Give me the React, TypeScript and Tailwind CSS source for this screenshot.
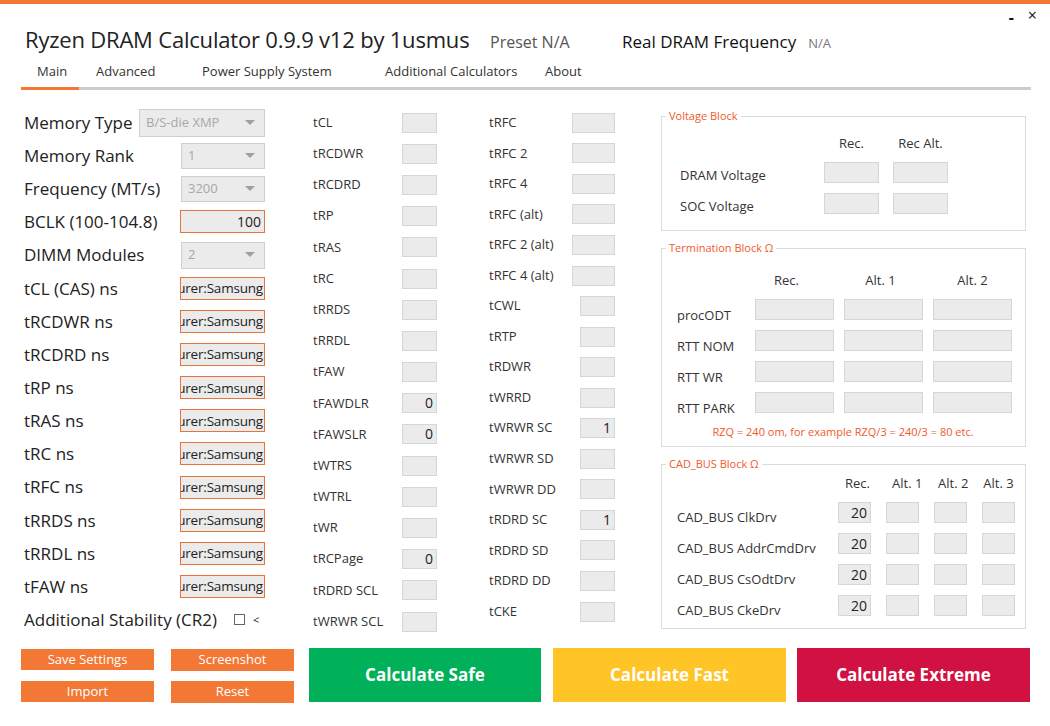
import React from "react";

const font = "font-['Open_Sans',sans-serif]";

const col2: [string, string][] = [
  ["tCL", ""], ["tRCDWR", ""], ["tRCDRD", ""], ["tRP", ""], ["tRAS", ""], ["tRC", ""],
  ["tRRDS", ""], ["tRRDL", ""], ["tFAW", ""], ["tFAWDLR", "0"], ["tFAWSLR", "0"],
  ["tWTRS", ""], ["tWTRL", ""], ["tWR", ""], ["tRCPage", "0"], ["tRDRD SCL", ""], ["tWRWR SCL", ""],
];

const col3: [string, string, boolean][] = [
  ["tRFC", "", true], ["tRFC 2", "", true], ["tRFC 4", "", true], ["tRFC (alt)", "", true],
  ["tRFC 2 (alt)", "", true], ["tRFC 4 (alt)", "", true], ["tCWL", "", false], ["tRTP", "", false],
  ["tRDWR", "", false], ["tWRRD", "", false], ["tWRWR SC", "1", false], ["tWRWR SD", "", false],
  ["tWRWR DD", "", false], ["tRDRD SC", "1", false], ["tRDRD SD", "", false], ["tRDRD DD", "", false],
  ["tCKE", "", false],
];

const nsRows = ["tCL (CAS) ns", "tRCDWR ns", "tRCDRD ns", "tRP ns", "tRAS ns", "tRC ns", "tRFC ns", "tRRDS ns", "tRRDL ns", "tFAW ns"];

function Box({ w, h, value }: { w: string; h: string; value?: string }) {
  return (
    <div className={`${w} ${h} bg-[#ebebeb] border border-[#d6d6d6] flex items-center justify-end pr-[3px] text-[14px] text-[#222] leading-none`}>
      {value}
    </div>
  );
}

function Dropdown({ w, h, text }: { w: string; h: string; text: string }) {
  return (
    <div className={`${w} ${h} bg-[#ebebeb] border border-[#cfcfcf] flex items-center justify-between pl-[6px] pr-[9px]`}>
      <span className="text-[13px] text-[#a8a8a8]">{text}</span>
      <svg width="10" height="6" viewBox="0 0 10 6"><path d="M0 0 L10 0 L5 5 Z" fill="#a0a0a0" /></svg>
    </div>
  );
}

function NameInput() {
  return (
    <div className="w-[85px] h-[23px] bg-[#ebebeb] border border-[#e8743b] overflow-hidden flex items-center justify-end pr-[1px]">
      <span className="whitespace-nowrap text-[13.5px] tracking-[-0.2px] text-[#222]">Manufacturer:Samsung</span>
    </div>
  );
}

function Group({ title, className, children }: { title: string; className: string; children: React.ReactNode }) {
  return (
    <div className={`relative border border-[#dcdcdc] ${className}`}>
      <span className="absolute left-[4px] -top-[9px] bg-white px-[3px] text-[11px] leading-[16px] text-[#ef5a2b]">{title}</span>
      {children}
    </div>
  );
}

export default function App() {
  return (
    <div className={`${font} w-[1050px] h-[726px] bg-white relative overflow-hidden text-[#222]`}>
      <div className="h-[4px] bg-[#f37735]" />
      {/* window controls */}
      <div className="absolute top-[5px] right-[13px] flex items-start gap-[14px] text-[#111]">
        <span className="text-[16px] font-bold leading-[24px]">-</span>
        <span className="text-[16px] leading-[20px]">×</span>
      </div>

      {/* header */}
      <div className="flex items-baseline pt-[19px] pl-[25px]">
        <div className="w-[465px] text-[22px] tracking-[-0.2px] leading-[32px] text-[#222] whitespace-nowrap">Ryzen DRAM Calculator 0.9.9 v12 by 1usmus</div>
        <div className="w-[132px] text-[16px] text-[#555]">Preset N/A</div>
        <div className="text-[17px] text-[#111]">Real DRAM Frequency</div>
        <div className="ml-[12px] text-[13px] text-[#777]">N/A</div>
      </div>

      {/* tabs */}
      <div className="mt-[7px] ml-[21px] w-[1010px]">
        <div className="flex text-[13px] leading-[18px] text-[#333] pb-[7px]">
          <div className="w-[75px] pl-[16px]">Main</div>
          <div className="w-[106px]">Advanced</div>
          <div className="w-[183px]">Power Supply System</div>
          <div className="w-[160px]">Additional Calculators</div>
          <div>About</div>
        </div>
        <div className="flex h-[3px]">
          <div className="w-[58px] bg-[#f37735]" />
          <div className="flex-1 bg-[#cccccc]" />
        </div>
      </div>

      {/* content */}
      <div className="flex mt-[16px] h-[542px] pl-[24px]">
        {/* left column */}
        <div className="w-[241px] flex flex-col">
          <div className="h-[33.15px] flex items-center justify-between">
            <span className="text-[17px]">Memory Type</span>
            <Dropdown w="w-[126px]" h="h-[28px]" text="B/S-die XMP" />
          </div>
          <div className="h-[33.15px] flex items-center justify-between">
            <span className="text-[17px]">Memory Rank</span>
            <Dropdown w="w-[84px]" h="h-[26px]" text="1" />
          </div>
          <div className="h-[33.15px] flex items-center justify-between">
            <span className="text-[17px]">Frequency (MT/s)</span>
            <Dropdown w="w-[84px]" h="h-[26px]" text="3200" />
          </div>
          <div className="h-[33.15px] flex items-center justify-between">
            <span className="text-[17px]">BCLK (100-104.8)</span>
            <div className="w-[85px] h-[23px] bg-[#ebebeb] border border-[#e8743b] flex items-center justify-end pr-[3px] text-[14px]">100</div>
          </div>
          <div className="h-[33.15px] flex items-center justify-between">
            <span className="text-[17px]">DIMM Modules</span>
            <Dropdown w="w-[84px]" h="h-[27px]" text="2" />
          </div>
          {nsRows.map((r) => (
            <div key={r} className="h-[33.15px] flex items-center justify-between">
              <span className="text-[17px]">{r}</span>
              <NameInput />
            </div>
          ))}
          <div className="h-[33.15px] flex items-center">
            <span className="text-[17px]">Additional Stability (CR2)</span>
            <div className="ml-[17px] w-[11px] h-[11px] border border-[#666] bg-white" />
            <span className="ml-[8px] text-[11px] leading-none">&lt;</span>
          </div>
        </div>

        {/* column 2 */}
        <div className="ml-[48px] w-[124px] flex flex-col pt-[1px]">
          {col2.map(([l, v]) => (
            <div key={l} className="h-[31.2px] flex items-center justify-between">
              <span className="text-[13px] text-[#333]">{l}</span>
              <Box w="w-[35px]" h="h-[20px]" value={v} />
            </div>
          ))}
        </div>

        {/* column 3 */}
        <div className="ml-[52px] w-[126px] flex flex-col pt-[1.5px]">
          {col3.map(([l, v, wide]) => (
            <div key={l} className="h-[30.56px] flex items-center justify-between">
              <span className="text-[13px] text-[#333]">{l}</span>
              <Box w={wide ? "w-[43px]" : "w-[35px]"} h="h-[20px]" value={v} />
            </div>
          ))}
        </div>

        {/* right column */}
        <div className="ml-[46px] w-[365px] flex flex-col pt-[10px] gap-[17px]">
          <Group title="Voltage Block" className="h-[115px] pt-[17px] pl-[18px]">
            <div className="grid grid-cols-[130px_55px_55px] gap-x-[14px] gap-y-[10px] items-center text-[13px] text-[#333]">
              <div className="leading-[18px]" />
              <div className="leading-[18px] text-center">Rec.</div>
              <div className="leading-[18px] text-center">Rec Alt.</div>
              <div className="h-[21px] leading-[26px]">DRAM Voltage</div>
              <Box w="w-[55px]" h="h-[21px]" />
              <Box w="w-[55px]" h="h-[21px]" />
              <div className="h-[21px] leading-[26px]">SOC Voltage</div>
              <Box w="w-[55px]" h="h-[21px]" />
              <Box w="w-[55px]" h="h-[21px]" />
            </div>
          </Group>

          <Group title="Termination Block Ω" className="h-[199px] pt-[22px] pl-[15px]">
            <div className="grid grid-cols-[68px_79px_79px_79px] gap-x-[10px] gap-y-[10px] items-center text-[13px] text-[#333]">
              <div className="leading-[18px]" />
              <div className="leading-[18px] text-center pr-[16px]">Rec.</div>
              <div className="leading-[18px] text-center pr-[6px]">Alt. 1</div>
              <div className="leading-[18px] text-center">Alt. 2</div>
              {["procODT", "RTT NOM", "RTT WR", "RTT PARK"].map((l) => (
                <React.Fragment key={l}>
                  <div className="h-[21px] leading-[32px] whitespace-nowrap">{l}</div>
                  <Box w="w-[79px]" h="h-[21px]" />
                  <Box w="w-[79px]" h="h-[21px]" />
                  <Box w="w-[79px]" h="h-[21px]" />
                </React.Fragment>
              ))}
            </div>
            <div className="mt-[11px] pr-[16px] text-center text-[11px] leading-[16px] text-[#ef5a2b]">RZQ = 240 om, for example RZQ/3 = 240/3 = 80 etc.</div>
          </Group>

          <Group title="CAD_BUS Block Ω" className="h-[165px] pt-[9px] pl-[15px]">
            <div className="grid grid-cols-[146px_33px_33px_33px_33px] gap-x-[15px] gap-y-[10px] items-center text-[13px] text-[#333]">
              <div className="leading-[18px]" />
              <div className="leading-[18px] text-center whitespace-nowrap pl-[6px]">Rec.</div>
              <div className="leading-[18px] text-center whitespace-nowrap pl-[6px]">Alt. 1</div>
              <div className="leading-[18px] text-center whitespace-nowrap pl-[4px]">Alt. 2</div>
              <div className="leading-[18px] text-center whitespace-nowrap">Alt. 3</div>
              {["CAD_BUS ClkDrv", "CAD_BUS AddrCmdDrv", "CAD_BUS CsOdtDrv", "CAD_BUS CkeDrv"].map((l) => (
                <React.Fragment key={l}>
                  <div className="h-[21px] leading-[30px] whitespace-nowrap">{l}</div>
                  <Box w="w-[33px]" h="h-[21px]" value="20" />
                  <Box w="w-[33px]" h="h-[21px]" />
                  <Box w="w-[33px]" h="h-[21px]" />
                  <Box w="w-[33px]" h="h-[21px]" />
                </React.Fragment>
              ))}
            </div>
          </Group>
        </div>
      </div>

      {/* bottom buttons */}
      <div className="flex pl-[21px] items-start">
        <div className="flex flex-col gap-[11px] pt-[1px]">
          <div className="w-[133px] h-[21px] bg-[#f37735] text-white text-[13px] flex items-center justify-center">Save Settings</div>
          <div className="w-[133px] h-[21px] bg-[#f37735] text-white text-[13px] flex items-center justify-center">Import</div>
        </div>
        <div className="ml-[17px] flex flex-col gap-[10px] pt-[1px]">
          <div className="w-[123px] h-[22px] bg-[#f37735] text-white text-[13px] flex items-center justify-center">Screenshot</div>
          <div className="w-[123px] h-[22px] bg-[#f37735] text-white text-[13px] flex items-center justify-center">Reset</div>
        </div>
        <div className="ml-[15px] w-[232px] h-[54px] bg-[#00b159] text-white text-[17px] font-bold flex items-center justify-center">Calculate Safe</div>
        <div className="ml-[12px] w-[233px] h-[54px] bg-[#ffc425] text-white text-[17px] font-bold flex items-center justify-center">Calculate Fast</div>
        <div className="ml-[11px] w-[233px] h-[54px] bg-[#d11141] text-white text-[17px] font-bold flex items-center justify-center">Calculate Extreme</div>
      </div>
    </div>
  );
}
